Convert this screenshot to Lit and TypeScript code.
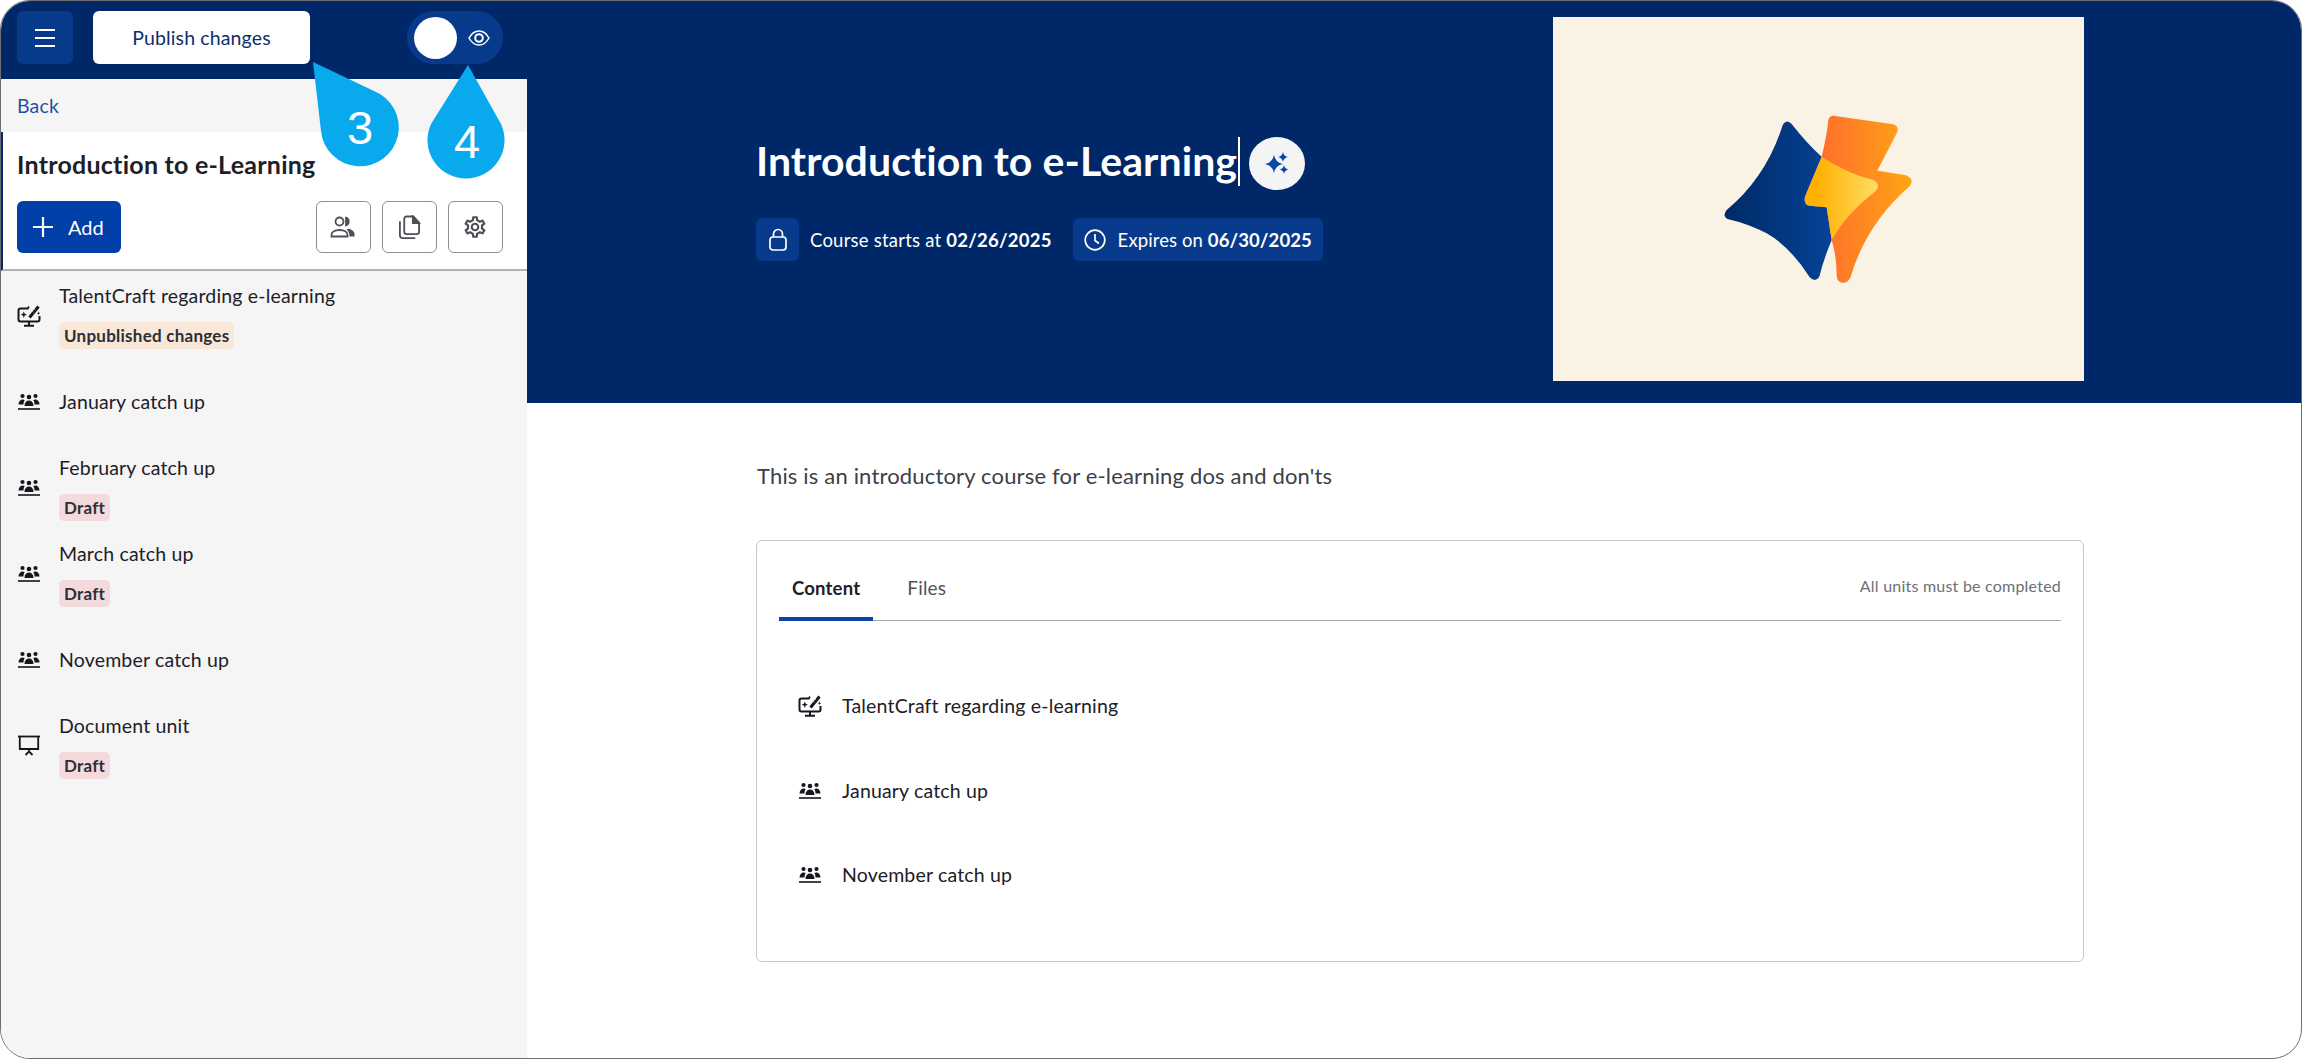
import { LitElement, html, css, svg } from "lit";
import { customElement } from "lit/decorators.js";

const groupIcon = html`<svg class="ic" viewBox="0 0 24 24" fill="currentColor"><circle cx="5.500" cy="6" r="2.100"/><circle cx="12" cy="7" r="2.300"/><circle cx="18.500" cy="6" r="2.100"/><path d="M1.500 14.500c0-3 2-5 4-5 1 0 1.800.3 2.300.8-1 1-1.300 2.700-1.300 4.200zM22.500 14.500c0-3-2-5-4-5-1 0-1.800.3-2.300.8 1 1 1.300 2.700 1.300 4.200zM7.500 16c0-3.500 2-5.400 4.500-5.400s4.500 1.900 4.500 5.400z"/><rect x="1" y="18.200" width="22" height="1.600"/></svg>`;

const lessonIcon = html`<svg class="ic" viewBox="0 0 24 24" fill="none" stroke="currentColor" stroke-width="2"><path d="M11.500 4.500H3.500a2 2 0 0 0-2 2v9a2 2 0 0 0 2 2h17a2 2 0 0 0 2-2V12"/><path d="M12 17.500v3.500M7 21.800h10"/><path d="M12.500 13.500L21.500 2.500" stroke-width="3"/><path d="M17.200 5l1 .9M15.500 7.200l1 .9" stroke="#f5f5f5" stroke-width=".8"/><path d="M6.800 7.500l.9 2.300 2.300.9-2.300.9-.9 2.300-.9-2.300-2.300-.9 2.300-.9z" fill="currentColor" stroke="none"/><path d="M11.500 1.500l.5 1.200 1.200.5-1.200.5-.5 1.200-.5-1.200-1.200-.5 1.200-.5zM21.500 7.500l.5 1.200 1.200.5-1.200.5-.5 1.200-.5-1.200-1.200-.5 1.200-.5z" fill="currentColor" stroke="none"/></svg>`;

const screenIcon = html`<svg class="ic" viewBox="0 0 24 24" fill="none" stroke="currentColor" stroke-width="1.800"><path d="M1 2.500h22"/><path d="M2.800 2.500V15h18.400V2.500"/><path d="M12 15v2.500M12 17.500l-3.500 3.500M12 17.500l3.500 3.500"/></svg>`;

const personsIcon = html`<svg viewBox="0 0 26 22" width="26" height="22" fill="none" stroke="#4d5157" stroke-width="1.800"><circle cx="9.500" cy="5.500" r="4"/><path d="M1.500 20.500v-1.500c0-3 3.500-5 8-5s8 2 8 5v1.500z"/><path d="M16 1.700a4 4 0 0 1 0 7.600z" fill="#4d5157"/><path d="M18.500 12.800c3.500.5 6 2.700 6 5.400v2.300H19.500c0-3-1-5.500-3-7z" fill="#4d5157" stroke="none"/></svg>`;

const copyIcon = html`<svg viewBox="0 0 24 26" width="23" height="25" fill="none" stroke="#4d5157" stroke-width="1.900"><path d="M2 6.500V21a3 3 0 0 0 3 3h13"/><path d="M6.500 4a2.500 2.500 0 0 1 2.500-2.500h7L22 8v9.500a2.500 2.500 0 0 1-2.500 2.500H9A2.500 2.500 0 0 1 6.500 17.500z"/><path d="M15.500 1.500V8.500H22z" fill="#4d5157"/></svg>`;

const gearIcon = html`<svg viewBox="0 0 24 24" width="26" height="26" fill="#4d5157"><path d="M19.430 12.980c.04-.32.07-.64.07-.98 0-.34-.03-.66-.07-.98l2.110-1.650c.19-.15.24-.42.12-.64l-2-3.460c-.09-.16-.26-.25-.44-.25-.06 0-.12.01-.17.03l-2.490 1c-.52-.4-1.080-.73-1.690-.98l-.38-2.650C14.460 2.180 14.250 2 14 2h-4c-.25 0-.46.18-.49.42l-.38 2.650c-.61.25-1.170.59-1.690.98l-2.490-1c-.06-.02-.12-.03-.18-.03-.17 0-.34.09-.43.25l-2 3.460c-.13.22-.07.49.12.64l2.110 1.650c-.04.32-.07.65-.07.98 0 .33.03.66.07.98l-2.110 1.650c-.19.15-.24.42-.12.64l2 3.460c.09.16.26.25.44.25.06 0 .12-.01.17-.03l2.490-1c.52.4 1.080.73 1.690.98l.38 2.650c.03.24.24.42.49.42h4c.25 0 .46-.18.49-.42l.38-2.650c.61-.25 1.170-.59 1.690-.98l2.490 1c.06.02.12.03.18.03.17 0 .34-.09.43-.25l2-3.460c.12-.22.07-.49-.12-.64l-2.110-1.650zm-1.980-1.710c.04.31.05.52.05.73 0 .21-.02.43-.05.73l-.14 1.130.89.7 1.080.84-.7 1.210-1.270-.51-1.040-.42-.9.68c-.43.32-.84.56-1.250.73l-1.060.43-.16 1.130-.2 1.350h-1.400l-.19-1.350-.16-1.130-1.060-.43c-.43-.18-.83-.41-1.230-.71l-.91-.7-1.060.43-1.270.51-.7-1.210 1.080-.84.89-.7-.14-1.130c-.03-.31-.05-.54-.05-.74s.02-.43.05-.73l.14-1.130-.89-.7-1.080-.84.7-1.210 1.270.51 1.040.42.9-.68c.43-.32.84-.56 1.250-.73l1.060-.43.16-1.130.2-1.350h1.390l.19 1.350.16 1.130 1.060.43c.43.18.83.41 1.230.71l.91.7 1.060-.43 1.270-.51.7 1.210-1.070.85-.89.7.14 1.130zM12 8c-2.210 0-4 1.790-4 4s1.790 4 4 4 4-1.790 4-4-1.790-4-4-4zm0 6c-1.100 0-2-.9-2-2s.9-2 2-2 2 .9 2 2-.9 2-2 2z"/></svg>`;

const logo = html`<svg class="logo" viewBox="0 0 900 660" width="300" height="220">
  <defs>
    <linearGradient id="lb" x1="0" y1="0" x2="1" y2="0"><stop offset="0" stop-color="#002a66"/><stop offset="1" stop-color="#054296"/></linearGradient>
    <linearGradient id="lo" x1="0" y1="0" x2="1" y2="0"><stop offset="0" stop-color="#ff6530"/><stop offset="1" stop-color="#ffa514"/></linearGradient>
    <linearGradient id="ly" x1="0" y1="0" x2="1" y2="0"><stop offset=".15" stop-color="#ffb000"/><stop offset="1" stop-color="#ffdd66"/></linearGradient>
  </defs>
  <path fill="url(#lo)" d="M505 90Q510 75 525 78L700 103Q720 110 710 130L652 242L735 255Q765 265 750 288Q620 400 572 560Q565 580 545 578Q530 575 530 555Q530 500 515 450L500 352L450 347Q430 345 435 320L485 200Q500 140 505 90Z"/>
  <path fill="url(#lb)" d="M368 105Q380 85 395 102Q440 160 485 200L435 320Q430 345 450 347L500 352L515 450Q490 510 478 560Q465 580 448 560Q390 470 320 430Q260 400 205 388Q185 378 200 360Q320 260 368 105Z"/>
  <path fill="url(#ly)" d="M485 200Q560 250 640 270Q665 285 645 305Q560 370 515 450L500 352L450 347Q430 345 435 320Z"/>
</svg>`;

const star = (cx: number, cy: number, r: number) =>
  svg`<path d="M${cx} ${cy - r}Q${cx + r * 0.15} ${cy - r * 0.15} ${cx + r} ${cy}Q${cx + r * 0.15} ${cy + r * 0.15} ${cx} ${cy + r}Q${cx - r * 0.15} ${cy + r * 0.15} ${cx - r} ${cy}Q${cx - r * 0.15} ${cy - r * 0.15} ${cx} ${cy - r}Z"/>`;

type Unit = { name: string; icon: unknown; badge?: string; kind?: string };
const units: Unit[] = [
  { name: "TalentCraft regarding e-learning", icon: lessonIcon, badge: "Unpublished changes", kind: "warn" },
  { name: "January catch up", icon: groupIcon },
  { name: "February catch up", icon: groupIcon, badge: "Draft", kind: "draft" },
  { name: "March catch up", icon: groupIcon, badge: "Draft", kind: "draft" },
  { name: "November catch up", icon: groupIcon },
  { name: "Document unit", icon: screenIcon, badge: "Draft", kind: "draft" },
];

@customElement("app-root")
export class AppRoot extends LitElement {
  static styles = css`
    :host { display: block; width: 2302px; height: 1059px; background: #fff; font-family: "Lato", "Noto Sans", sans-serif; color: #1d2026; }
    * { box-sizing: border-box; }
    .frame { position: relative; display: flex; width: 2302px; height: 1059px; border: 1px solid #6f6f6f; border-radius: 30px; overflow: hidden; background: #fff; }
    .side { flex: none; width: 526px; display: flex; flex-direction: column; background: #f5f5f5; }
    .head { flex: none; height: 78px; background: #002868; display: flex; align-items: flex-start; padding: 10px 24px 0 16px; }
    .menu { width: 56px; height: 53px; background: #083a8c; border-radius: 6px; display: flex; align-items: center; justify-content: center; }
    .publish { width: 217px; height: 53px; margin-left: 20px; background: #fff; border-radius: 6px; display: flex; align-items: center; justify-content: center; color: #0d2f6c; font-size: 19.500px; letter-spacing: .13px; }
    .toggle { margin-left: auto; width: 96px; height: 53px; border-radius: 27px; background: #083a8c; display: flex; align-items: center; padding: 0 13px 0 7px; justify-content: space-between; }
    .knob { width: 43px; height: 42px; border-radius: 50%; background: #fff; }
    .back { flex: none; height: 53px; display: flex; align-items: center; padding-left: 16px; font-size: 19.500px; color: #1f52a3; letter-spacing: .15px; }
    .course { flex: none; height: 139px; background: #fff; border-left: 2px solid #002868; border-bottom: 2px solid #b0b4ba; padding: 17px 24px 0 14px; }
    .course h2 { margin: 0; font-size: 25px; line-height: 30px; font-weight: 700; color: #1d2026; letter-spacing: .25px; }
    .actions { display: flex; align-items: center; margin-top: 22px; gap: 10.500px; }
    .add { width: 104px; height: 52px; background: #0040a8; border-radius: 6px; color: #fff; display: flex; align-items: center; gap: 15px; padding-left: 16px; font-size: 20px; margin-right: auto; }
    .iconbtn { width: 55.500px; height: 52px; border: 1.500px solid #8b9096; border-radius: 6px; background: #fff; display: flex; align-items: center; justify-content: center; }
    .list { padding: 2px 0 0 0; }
    .unit { height: 86px; display: flex; align-items: center; padding-left: 16px; gap: 18px; }
    .ic { width: 24px; height: 24px; flex: none; color: #14171c; }
    .stack { display: flex; flex-direction: column; align-items: flex-start; gap: 14px; }
    .name { font-size: 19.500px; line-height: 24px; letter-spacing: .17px; color: #1d2026; }
    .badge { height: 27px; padding: 0 5px; border-radius: 5px; font-size: 17px; font-weight: 700; line-height: 27px; letter-spacing: .25px; color: #2c2f36; }
    .warn { background: #f9e8d8; }
    .draft { background: #f4dadd; }
    .main { flex: 1; min-width: 0; display: flex; flex-direction: column; }
    .hero { flex: none; height: 402px; background: #002868; padding: 16px 0 0 229px; display: flex; }
    .hero-left { width: 797px; padding-top: 119px; }
    .title-row { display: flex; align-items: center; height: 50px; }
    .title-row h1 { margin: 0; font-size: 41px; font-weight: 700; color: #fff; line-height: 50px; letter-spacing: .08px; }
    .caret { width: 1.500px; height: 49px; background: #fff; margin-left: 1px; }
    .spark { width: 56px; height: 53px; border-radius: 50%; background: #f4f4f4; margin: 4px 0 0 9px; display: flex; align-items: center; justify-content: center; flex: none; }
    .chips { display: flex; margin-top: 32px; align-items: center; }
    .chip { height: 43px; background: #083a8c; border-radius: 6px; display: flex; align-items: center; color: #fff; font-size: 18.500px; letter-spacing: .1px; }
    .chip b { font-weight: 700; }
    .lock { width: 43px; justify-content: center; }
    .plain { color: #fff; font-size: 18.500px; letter-spacing: .22px; margin: 0 21px 0 11px; white-space: nowrap; }
    .plain b { font-weight: 700; }
    .exp { padding: 0 11px 0 11px; gap: 12px; white-space: nowrap; }
    .cover { width: 531px; height: 364px; background: #f9f2e5; display: flex; align-items: center; justify-content: center; padding: 2px 17px 0 0; }
    .logo { display: block; }
    .body { flex: 1; padding: 0 0 0 229px; }
    .desc { margin: 0; padding: 59px 0 0 1px; height: 137px; font-size: 22px; line-height: 28px; color: #3c4048; letter-spacing: .17px; }
    .card { width: 1328px; height: 422px; border: 1px solid #c4c7cc; border-radius: 6px; padding: 0 22px; }
    .tabs { height: 80px; display: flex; align-items: flex-end; border-bottom: 1px solid #a4a8ae; }
    .tab { height: 100%; display: flex; align-items: flex-end; font-size: 19px; padding: 0 13px 18px; letter-spacing: .2px; color: #50545c; margin-bottom: -1px; border-bottom: 4px solid transparent; }
    .tab.on { font-size: 18.500px; font-weight: 700; color: #1d2026; border-bottom-color: #0a45a5; margin-right: 21px; }
    .note { margin-left: auto; align-self: center; font-size: 16px; color: #6d7078; letter-spacing: .22px; padding-top: 10px; }
    .rows { padding: 43px 0 0 19px; }
    .row { height: 84.500px; display: flex; align-items: center; gap: 20px; }
    .drop { position: absolute; pointer-events: none; }
    .drop text { font-family: "Liberation Sans", sans-serif; font-size: 47px; fill: #fff; text-anchor: middle; }
  `;

  render() {
    return html`<div class="frame">
      <aside class="side">
        <div class="head">
          <div class="menu"><svg width="22" height="20" viewBox="0 0 22 20" stroke="#fff" stroke-width="2.200"><path d="M1 2h20M1 10h20M1 18h20"/></svg></div>
          <div class="publish">Publish changes</div>
          <div class="toggle"><div class="knob"></div>
            <svg width="22" height="16" viewBox="0 0 22 16" fill="none" stroke="#fff" stroke-width="1.500"><path d="M1 8c2.500-4.500 6-7 10-7s7.500 2.500 10 7c-2.500 4.500-6 7-10 7S3.500 12.500 1 8z"/><circle cx="11" cy="8" r="3.800" stroke-width="2"/></svg>
          </div>
        </div>
        <div class="back">Back</div>
        <div class="course">
          <h2>Introduction to e-Learning</h2>
          <div class="actions">
            <div class="add"><svg width="20" height="20" viewBox="0 0 20 20" stroke="#fff" stroke-width="2.200"><path d="M10 0v20M0 10h20"/></svg>Add</div>
            <div class="iconbtn">${personsIcon}</div>
            <div class="iconbtn">${copyIcon}</div>
            <div class="iconbtn">${gearIcon}</div>
          </div>
        </div>
        <div class="list">
          ${units.map((u) => html`<div class="unit">${u.icon}<div class="stack"><div class="name">${u.name}</div>${u.badge ? html`<div class="badge ${u.kind}">${u.badge}</div>` : ""}</div></div>`)}
        </div>
      </aside>
      <main class="main">
        <section class="hero">
          <div class="hero-left">
            <div class="title-row"><h1>Introduction to e-Learning</h1><span class="caret"></span>
              <div class="spark"><svg width="24" height="22" viewBox="0 0 24 22" fill="#0a45a5">${star(9, 12, 9)}${star(18, 5, 5)}${star(19, 17.500, 4.500)}</svg></div>
            </div>
            <div class="chips">
              <div class="chip lock"><svg width="18" height="23" viewBox="0 0 18 23" fill="none" stroke="#fff" stroke-width="1.700"><rect x="1" y="9" width="16" height="13" rx="3"/><path d="M4.500 9V6a4.500 4.500 0 0 1 9 0v3"/></svg></div>
              <div class="plain">Course starts at <b>02/26/2025</b></div>
              <div class="chip exp"><svg width="22" height="22" viewBox="0 0 22 22" fill="none" stroke="#fff" stroke-width="1.700"><circle cx="11" cy="11" r="9.800"/><path d="M11 5v6.500l4 3"/></svg><span>Expires on <b>06/30/2025</b></span></div>
            </div>
          </div>
          <div class="cover">${logo}</div>
        </section>
        <section class="body">
          <p class="desc">This is an introductory course for e-learning dos and don'ts</p>
          <div class="card">
            <div class="tabs">
              <div class="tab on">Content</div>
              <div class="tab">Files</div>
              <div class="note">All units must be completed</div>
            </div>
            <div class="rows">
              ${[units[0], units[1], units[4]].map((u) => html`<div class="row">${u.icon}<div class="name">${u.name}</div></div>`)}
            </div>
          </div>
        </section>
      </main>
      <svg class="drop" style="left:0;top:0" width="520" height="190" viewBox="0 0 520 190">
        <path fill="#09a9ee" d="M312 61L373 90A39 39 0 1 1 320 130Z"/>
        <text x="359" y="143">3</text>
        <path fill="#09a9ee" d="M467 64L500 123A38.500 38.500 0 1 1 430 123Z"/>
        <text x="466" y="157">4</text>
      </svg>
    </div>`;
  }
}
